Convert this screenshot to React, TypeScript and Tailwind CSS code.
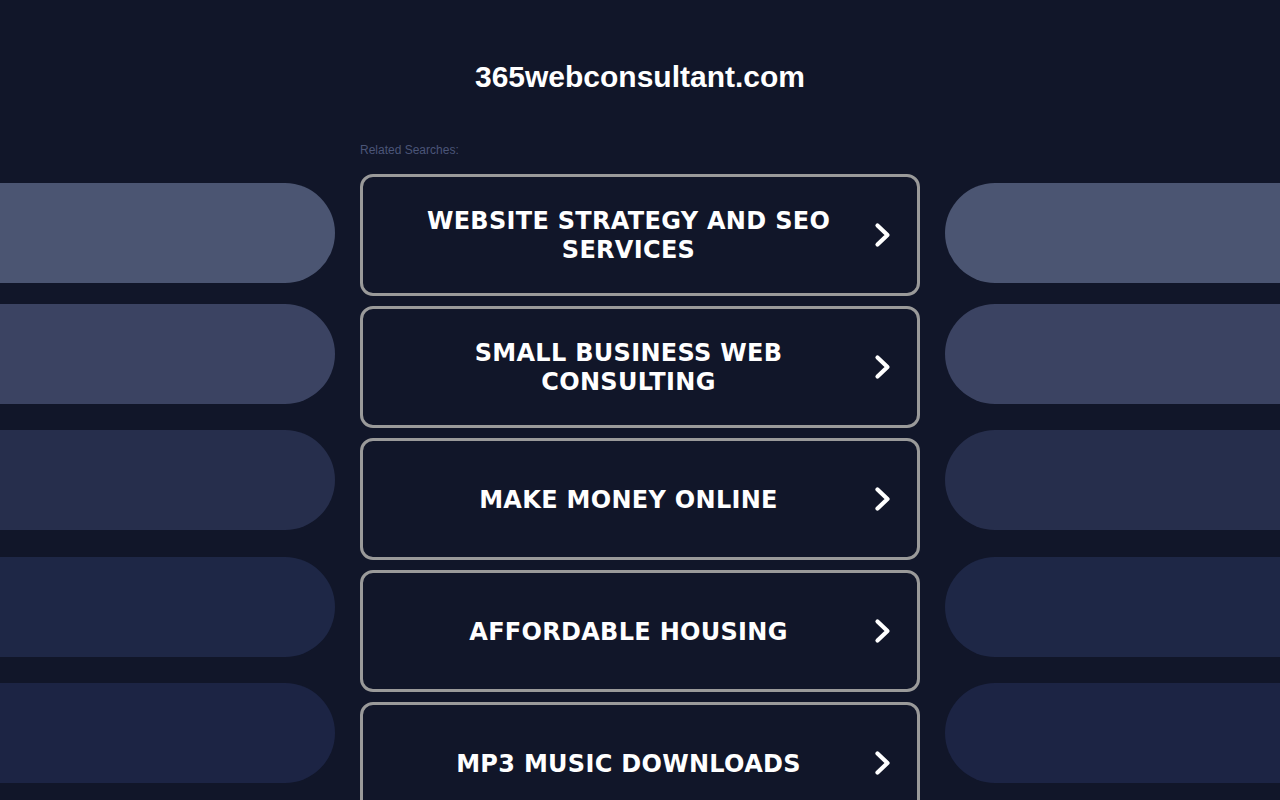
import React from "react";

const searches = [
    "WEBSITE STRATEGY AND SEO SERVICES",
    "SMALL BUSINESS WEB CONSULTING",
    "MAKE MONEY ONLINE",
    "AFFORDABLE HOUSING",
    "MP3 MUSIC DOWNLOADS",
];

// decorative side pills, brightest at the top
const pills = [
    { color: "bg-[#4b5572]", mt: "mt-[9px]" },
    { color: "bg-[#3b4362]", mt: "mt-[21px]" },
    { color: "bg-[#262e4c]", mt: "mt-[26px]" },
    { color: "bg-[#1e2746]", mt: "mt-[27px]" },
    { color: "bg-[#1c2444]", mt: "mt-[26px]" },
];

function Chevron() {
    return (
        <svg width="17" height="26" viewBox="0 0 17 26" className="shrink-0">
            <polyline points="3.5,3.5 13.5,13 3.5,22.5" fill="none" stroke="#ffffff" strokeWidth="4.2" strokeLinecap="round" strokeLinejoin="round" />
        </svg>
    );
}

function SideColumn(props: { side: "left" | "right" }) {
    return (
        <div className="flex flex-col">
            {pills.map((p, i) => (
                <div
                    key={i}
                    className={`h-[100px] ${p.color} ${p.mt} ${props.side == "left" ? "rounded-r-[50px]" : "rounded-l-[50px]"}`}
                ></div>
            ))}
        </div>
    );
}

export default function App() {
    return (
        <div className="h-[800px] overflow-hidden bg-[#111629]">
            <div className="pt-[57px] text-center text-white font-bold text-[30px] leading-[40px]" style={{ fontFamily: '"Liberation Sans", Arial, sans-serif' }}>
                365webconsultant.com
            </div>
            <div className="grid grid-cols-[335px_560px_335px] gap-x-[25px] mt-[45px]">
                <div></div>
                <div className="text-[12px] leading-[16px] text-[#4b5578] mb-[16px]" style={{ fontFamily: '"Liberation Sans", Arial, sans-serif' }}>
                    Related Searches:
                </div>
                <div></div>

                <SideColumn side="left" />
                <div className="flex flex-col gap-[10px]">
                    {searches.map((s) => (
                        <a
                            key={s}
                            href="#"
                            className="flex items-center h-[122px] border-[3px] border-[#9a9a9a] rounded-[13px] pl-[20px] pr-[26px] bg-[#111629]"
                        >
                            <span
                                className="flex-1 px-[22px] pt-[2px] text-center text-white font-bold text-[24px] leading-[29px] tracking-[0.3px]"
                                style={{ fontFamily: '"DejaVu Sans", Verdana, sans-serif' }}
                            >
                                {s}
                            </span>
                            <Chevron />
                        </a>
                    ))}
                </div>
                <SideColumn side="right" />
            </div>
        </div>
    );
}
